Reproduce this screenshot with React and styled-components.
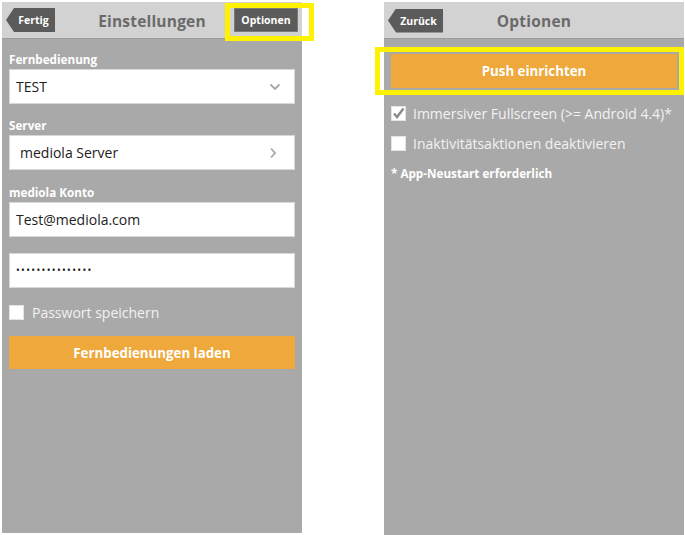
import React from "react";
import styled, { createGlobalStyle } from "styled-components";

const Global = createGlobalStyle`
  html, body { margin: 0; padding: 0; background: #ffffff; }
  body { font-family: "Open Sans", "Noto Sans", sans-serif; }
`;

const Page = styled.div`
  display: flex;
  align-items: flex-start;
  gap: 82px;
  padding: 2px 0 0 2px;
`;

const Panel = styled.div`
  position: relative;
  width: 300px;
  height: ${(p) => p.$height}px;
  background: #a9a9a9;
  display: flex;
  flex-direction: column;
`;

const Header = styled.div`
  height: 36px;
  background: #d2d2d2;
  border-bottom: 1px solid #9c9c9c;
  display: grid;
  grid-template-columns: 1fr auto 1fr;
  align-items: center;
  padding: 0 4px;
`;

const Title = styled.div`
  font-size: 15.5px;
  font-weight: 700;
  color: #6a6a6a;
  letter-spacing: 0.2px;
  margin-top: 2px;
`;

const BackButton = styled.div`
  justify-self: start;
  height: 24px;
  width: ${(p) => p.$w}px;
  margin-top: ${(p) => p.$mt || 0}px;
  background: #5b5b5b;
  color: #fff;
  font-size: 10.5px;
  font-weight: 700;
  display: flex;
  align-items: center;
  justify-content: center;
  padding-left: 6px;
  box-sizing: border-box;
  clip-path: polygon(8px 0, 100% 0, 100% 100%, 8px 100%, 0 50%);
`;

const NavButton = styled.div`
  justify-self: end;
  height: 24px;
  width: 64px;
  background: #5b5b5b;
  border: 1px solid #7a7a7a;
  box-sizing: border-box;
  color: #fff;
  font-size: 10.5px;
  font-weight: 700;
  display: flex;
  align-items: center;
  justify-content: center;
`;

const Body = styled.div`
  display: flex;
  flex-direction: column;
  padding: 0 7px;
`;

const Label = styled.div`
  font-size: 11.7px;
  font-weight: 700;
  color: #ffffff;
  line-height: 16px;
  margin: ${(p) => p.$mt}px 0 2px;
`;

const Field = styled.div`
  height: 35px;
  box-sizing: border-box;
  background: #ffffff;
  border: 1px solid #d8d8d8;
  display: flex;
  align-items: center;
  justify-content: space-between;
  padding: 0 ${(p) => p.$pr || 13}px 0 ${(p) => p.$pl || 6}px;
  margin-top: ${(p) => p.$mt || 0}px;
  font-size: 14px;
  color: #222;
`;

const Dots = styled.span`
  font-size: 10px;
  letter-spacing: 1.35px;
  color: #111;
  position: relative;
  top: -1px;
`;

const CheckRow = styled.div`
  display: flex;
  align-items: center;
  gap: ${(p) => p.$gap}px;
  height: 24px;
  margin-top: ${(p) => p.$mt}px;
  font-size: 14px;
  color: #f2f2f2;
`;

const Box = styled.div`
  width: 15px;
  height: 15px;
  box-sizing: border-box;
  background: #ffffff;
  border: 1px solid #e4e4e4;
  display: flex;
  align-items: center;
  justify-content: center;
`;

const Action = styled.div`
  height: ${(p) => p.$h}px;
  margin-top: ${(p) => p.$mt}px;
  background: #eea83b;
  color: #ffffff;
  font-size: 13.3px;
  font-weight: 700;
  display: flex;
  align-items: center;
  justify-content: center;
`;

const Note = styled.div`
  margin-top: 10px;
  font-size: 11.7px;
  line-height: 16px;
  font-weight: 700;
  color: #ffffff;
`;

const Highlight = styled.div`
  position: absolute;
  left: ${(p) => p.$x}px;
  top: ${(p) => p.$y}px;
  width: ${(p) => p.$w}px;
  height: ${(p) => p.$h}px;
  box-sizing: border-box;
  border: 5px solid #fff200;
  pointer-events: none;
`;

const ChevronDown = () => (
  <svg width="12" height="8" viewBox="0 0 12 8">
    <path d="M1.5 1.5 L6 6 L10.5 1.5" fill="none" stroke="#a8a8a8" strokeWidth="1.8" />
  </svg>
);

const ChevronRight = () => (
  <svg width="8" height="12" viewBox="0 0 8 12">
    <path d="M2 1.5 L6 6 L2 10.5" fill="none" stroke="#a8a8a8" strokeWidth="1.8" />
  </svg>
);

const Check = () => (
  <svg width="13" height="13" viewBox="0 0 13 13">
    <path d="M2 6.5 L5 10 L11.5 1.5" fill="none" stroke="#8a8a8a" strokeWidth="2.4" />
  </svg>
);

export default function App() {
  return (
    <>
      <Global />
      <Page>
        <Panel $height={531}>
          <Header>
            <BackButton $w={49}>Fertig</BackButton>
            <Title>Einstellungen</Title>
            <NavButton>Optionen</NavButton>
          </Header>
          <Body>
            <Label $mt={12}>Fernbedienung</Label>
            <Field>
              <span>TEST</span>
              <ChevronDown />
            </Field>
            <Label $mt={13}>Server</Label>
            <Field $pl={10} $pr={17}>
              <span>mediola Server</span>
              <ChevronRight />
            </Field>
            <Label $mt={14}>mediola Konto</Label>
            <Field>
              <span>Test@mediola.com</span>
            </Field>
            <Field $mt={16}>
              <Dots>•••••••••••••••</Dots>
            </Field>
            <CheckRow $mt={12} $gap={8}>
              <Box />
              <span>Passwort speichern</span>
            </CheckRow>
            <Action $h={33} $mt={12}>Fernbedienungen laden</Action>
          </Body>
          <Highlight $x={223} $y={1} $w={89} $h={38} />
        </Panel>
        <Panel $height={533}>
          <Header>
            <BackButton $w={55} $mt={1}>Zurück</BackButton>
            <Title>Optionen</Title>
            <span />
          </Header>
          <Body>
            <Action $h={34} $mt={15}>Push einrichten</Action>
            <CheckRow $mt={13} $gap={7}>
              <Box>
                <Check />
              </Box>
              <span>Immersiver Fullscreen (&gt;= Android 4.4)*</span>
            </CheckRow>
            <CheckRow $mt={6} $gap={7}>
              <Box />
              <span>Inaktivitätsaktionen deaktivieren</span>
            </CheckRow>
            <Note>* App-Neustart erforderlich</Note>
          </Body>
          <Highlight $x={-9} $y={45} $w={309} $h={48} />
        </Panel>
      </Page>
    </>
  );
}
